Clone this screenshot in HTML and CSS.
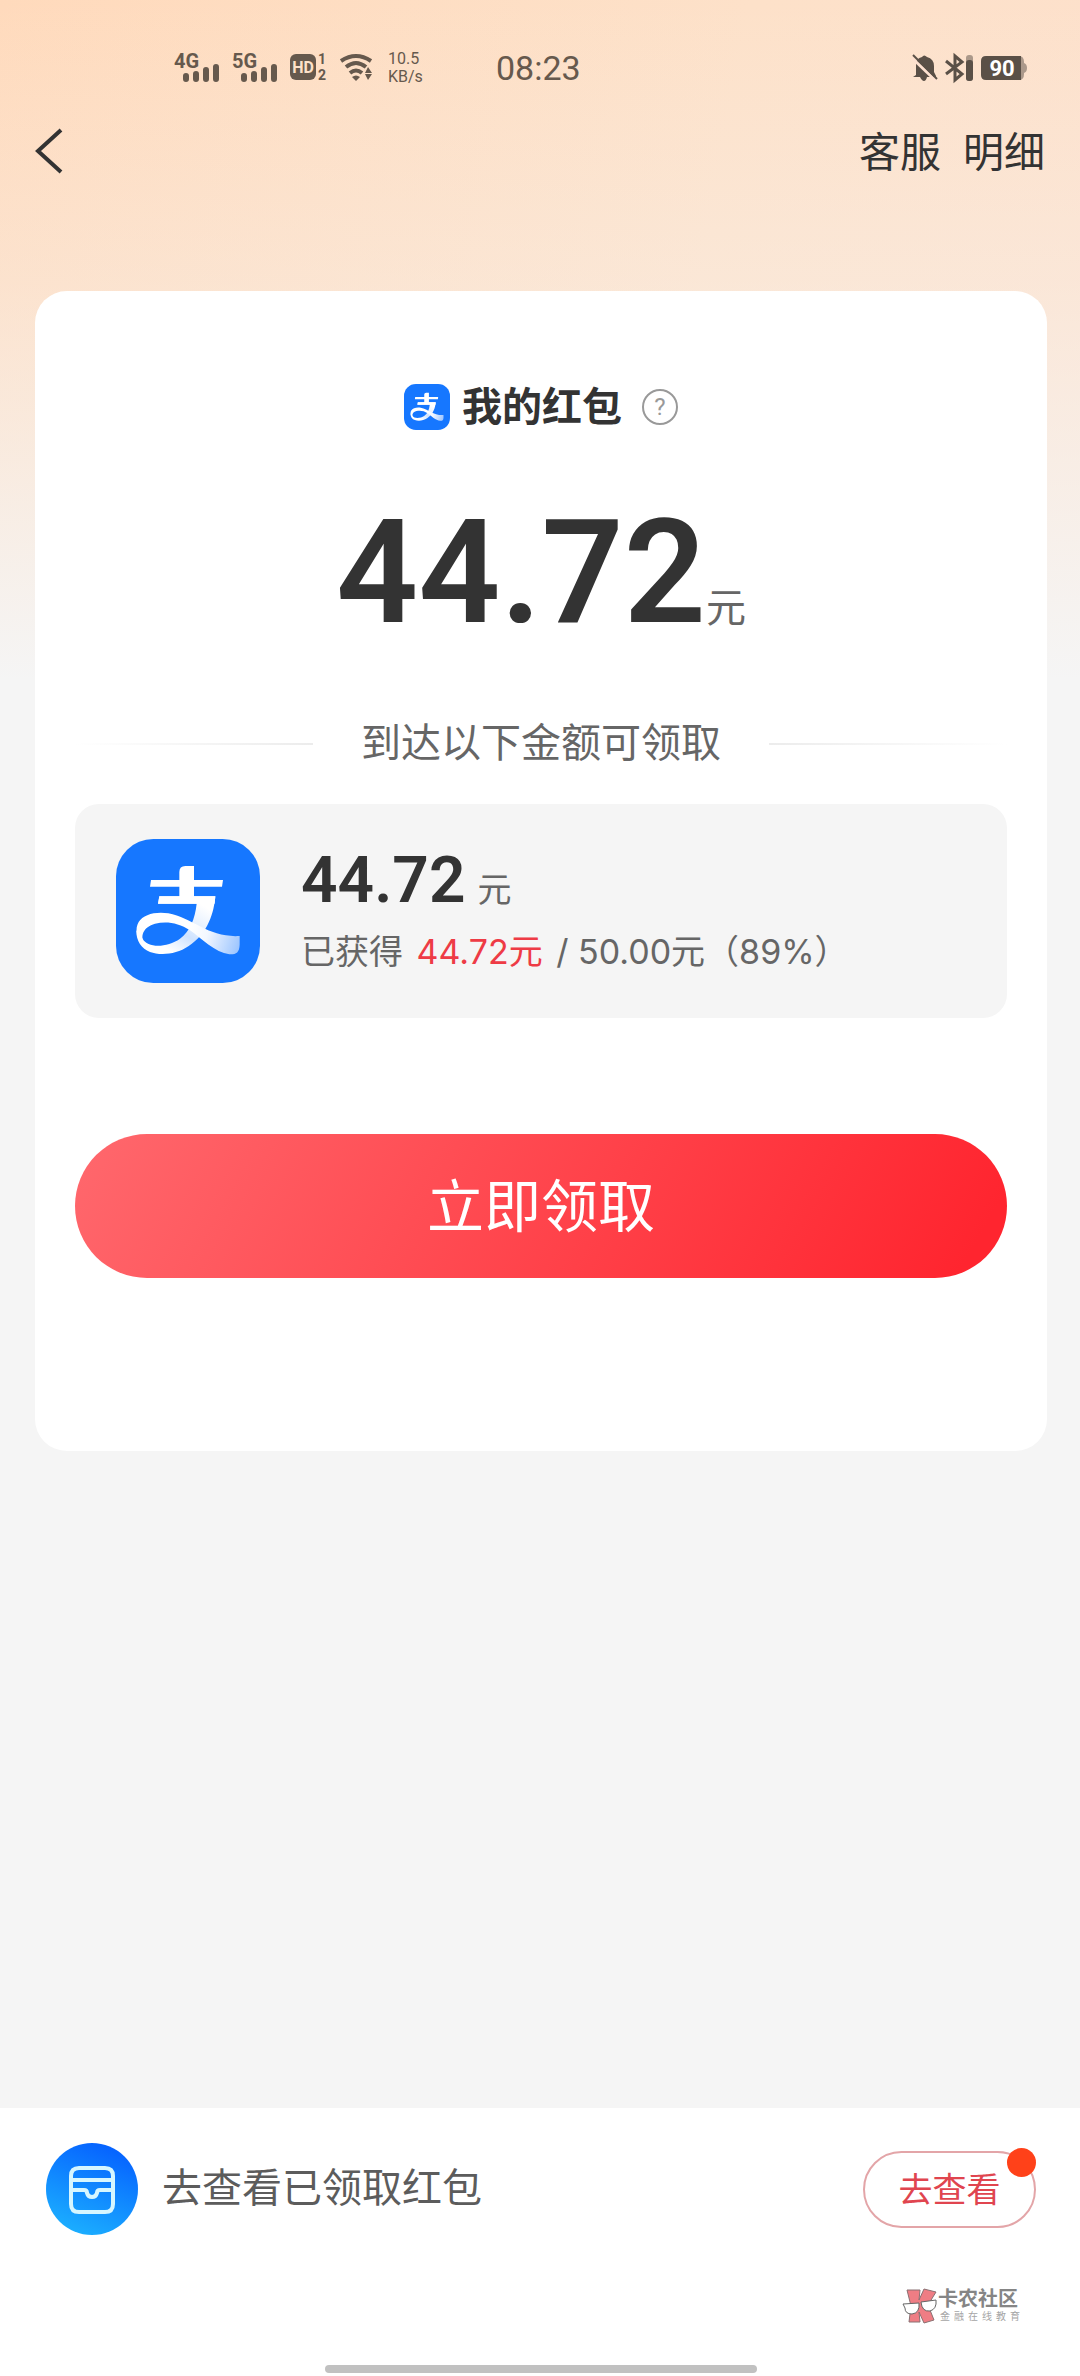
FILE: index.html
```html
<!DOCTYPE html>
<html lang="zh-CN">
<head>
<meta charset="utf-8">
<meta name="viewport" content="width=device-width, initial-scale=1">
<title>我的红包</title>
<link rel="stylesheet" href="styles.css">
</head>
<body>
<svg class="defs" aria-hidden="true">
  <defs>
    <linearGradient id="tail" gradientUnits="userSpaceOnUse" x1="270" y1="320" x2="420" y2="370">
      <stop offset="0" stop-color="#fff"/><stop offset=".35" stop-color="#f2f7ff"/><stop offset="1" stop-color="#9cc5ff"/>
    </linearGradient>
    <linearGradient id="leg" gradientUnits="userSpaceOnUse" x1="300" y1="245" x2="215" y2="390">
      <stop offset="0" stop-color="#fff"/><stop offset=".4" stop-color="#e3efff"/><stop offset=".62" stop-color="#cfe3ff"/><stop offset="1" stop-color="#fff"/>
    </linearGradient>
    <symbol id="alipay" viewBox="48 51 432 432">
      <rect x="48" y="51" width="432" height="432" rx="112" fill="#1677ff"/>
      <path fill="url(#leg)" d="M178 223H346C342 270 325 335 265 373C230 398 180 401 150 390C125 380 108 358 109 325L128 350C142 378 200 378 240 350C270 328 285 290 290 245H174Z"/>
      <path fill="#fff" d="M153 174H238V150Q238 132 256 132H282V174H369L366 194H282V223H346L344 245H174L178 223H238V194H150Z"/>
      <path fill="url(#tail)" d="M135 368C108 350 104 320 116 300C130 278 165 268 205 274C240 280 270 298 300 313C335 332 375 345 419 342V368C418 392 408 398 388 397C345 392 305 350 270 325C235 302 200 297 165 305C130 315 118 342 135 368Z"/>
    </symbol>
  </defs>
</svg>
<div class="page">
  <header class="status">
    <div class="status-left">
      <svg width="46" height="32" viewBox="0 0 46 32" role="img" aria-label="4G">
        <text class="net" x="0" y="16">4G</text>
        <path class="bars" d="M12 24v3M22 22v5M32 18v9M42 15v12"/>
      </svg>
      <svg width="46" height="32" viewBox="0 0 46 32" role="img" aria-label="5G">
        <text class="net" x="0" y="16">5G</text>
        <path class="bars" d="M12 24v3M22 22v5M32 18v9M42 15v12"/>
      </svg>
      <svg width="38" height="32" viewBox="0 0 38 32" role="img" aria-label="HD">
        <rect x="0" y="2" width="26" height="26" rx="6"/>
        <text class="hd" x="13" y="21">HD</text>
        <text class="sim" x="28" y="12">1</text>
        <text class="sim" x="28" y="28">2</text>
      </svg>
      <svg width="32" height="32" viewBox="0 0 32 32" aria-hidden="true">
        <path class="wave" d="M1 9Q16-1 31 9M6 15Q16 7 26 15M10 21Q16 16 22 21"/>
        <path d="M12 25Q16 22 20 25L16 29Z M28 15l4 6h-7z M28 28l4-6h-7z"/>
      </svg>
      <div class="speed"><span>10.5</span><span>KB/s</span></div>
    </div>
    <time class="clock">08:23</time>
    <div class="status-right">
      <svg width="26" height="28" viewBox="0 0 26 28" aria-hidden="true">
        <path d="M4 21V11Q4 4 10 3Q12 0 15 3Q22 5 22 12V18L24 22V23H15Q14 27 12 27T8 23H1Z"/>
        <path class="slash-gap" d="M0 4L24 27"/><path class="slash" d="M1 1L25 25"/>
      </svg>
      <svg width="30" height="28" viewBox="0 0 30 28" aria-hidden="true">
        <path class="bt" d="M2 7L18 20L11 26V2L18 8L2 20"/>
        <rect x="22" y="1" width="7" height="26" rx="3" opacity=".5"/><rect x="22" y="6" width="7" height="21" rx="3"/>
      </svg>
      <svg width="48" height="28" viewBox="0 0 48 28" role="img" aria-label="90">
        <path opacity=".5" d="M38 2h1q5 0 5 6v1q3 1 3 5t-3 5v1q0 6-5 6h-1z"/>
        <path d="M6 2H41V26H6Q1 26 1 21V7Q1 2 6 2Z"/>
        <text class="battery" x="22" y="22">90</text>
      </svg>
    </div>
  </header>

  <nav class="nav">
    <button class="back" type="button" aria-label="返回">
      <svg width="28" height="46" viewBox="0 0 28 46"><path d="M26 2L3 23L26 44"/></svg>
    </button>
    <div class="links"><a href="#service">客服</a><a href="#detail">明细</a></div>
  </nav>

  <main class="card">
    <h1 class="title">
      <svg class="logo-small"><use href="#alipay"/></svg>
      <span>我的红包</span>
      <button class="help" type="button" aria-label="说明">?</button>
    </h1>
    <p class="total"><strong>44.72</strong><span>元</span></p>
    <p class="divider"><span>到达以下金额可领取</span></p>
    <section class="goal">
      <svg class="logo"><use href="#alipay"/></svg>
      <div class="goal-text">
        <p class="goal-amount"><strong>44.72</strong><span>元</span></p>
        <p class="progress">已获得 <em>44.72元</em> / 50.00元（89%）</p>
      </div>
    </section>
    <button class="claim" type="button">立即领取</button>
  </main>

  <footer class="footer">
    <div class="footer-row">
      <svg class="box" viewBox="0 0 92 92" aria-hidden="true">
        <defs><linearGradient id="sky" x1=".7" y1="0" x2=".3" y2="1"><stop offset="0" stop-color="#0560ff"/><stop offset="1" stop-color="#1cb0ff"/></linearGradient></defs>
        <circle cx="46" cy="46" r="46" fill="url(#sky)"/>
        <path d="M33 25H59Q67 25 67 33V61Q67 69 59 69H33Q25 69 25 61V33Q25 25 33 25ZM25 37H67M25 47H38Q41 47 41 50Q42 54 46 54T51 50Q51 47 54 47H67"/>
      </svg>
      <p class="footer-text">去查看已领取红包</p>
      <button class="view" type="button">去查看<i class="dot"></i></button>
    </div>
    <div class="brand">
      <svg width="36" height="36" viewBox="0 0 36 36" aria-hidden="true">
        <path class="k" d="M5 2H18L17 12L22 1L34 4L26 17L32 32L22 35L17 24L18 34H7L9 18Z"/>
        <path class="lens" d="M1 16L17 15Q18 25 10 26Q3 26 3 20ZM19 14L34 12Q35 21 28 23Q20 24 19 14Z"/>
      </svg>
      <div class="brand-text"><b>卡农社区</b><small><span>金</span><span>融</span><span>在</span><span>线</span><span>教</span><span>育</span></small></div>
    </div>
    <div class="home"></div>
  </footer>
</div>
</body>
</html>
```
FILE: styles.css
```css
* { box-sizing: border-box; margin: 0; padding: 0; }

body {
  background: #f5f5f5;
  color: #333;
  font-family: Roboto, "Noto Sans CJK SC", sans-serif;
}

button { border: 0; background: none; font: inherit; color: inherit; cursor: pointer; }
a { color: inherit; text-decoration: none; }
svg { display: block; flex: none; overflow: visible; }
.defs { position: absolute; width: 0; height: 0; }

.page {
  display: flex;
  flex-direction: column;
  min-height: 100vh;
  background:
    linear-gradient(to bottom, rgba(245, 245, 245, 0) 0, rgba(245, 245, 245, .3) 280px, #f5f5f5 680px),
    linear-gradient(100deg, #ffdabc 0%, #fde1c9 50%, #fde0cd 100%);
}

/* Status bar */
.status {
  display: grid;
  grid-template-columns: 322px auto 1fr;
  align-items: center;
  height: 106px;
  padding: 30px 52px 0 174px;
  color: #66594d;
}
.status svg { fill: currentColor; }
.status-left { display: flex; align-items: center; gap: 12px; }
.status-right { display: flex; align-items: center; justify-content: flex-end; gap: 6px; color: #5a5047; }
.net { font: 700 20px/20px Roboto, sans-serif; }
.bars { stroke: currentColor; stroke-width: 6; stroke-linecap: round; }
.hd { font: 700 16px/16px Roboto, sans-serif; fill: #fde1c9; text-anchor: middle; }
.sim { font: 700 14px/14px Roboto, sans-serif; }
.wave { fill: none; stroke: currentColor; stroke-width: 4; }
.speed { display: flex; flex-direction: column; padding-left: 4px; font-size: 16px; line-height: 18px; }
.clock { font-size: 34px; line-height: 40px; }
.slash-gap { stroke: #fde1d0; stroke-width: 3; }
.slash { stroke: currentColor; stroke-width: 2; }
.bt { fill: none; stroke: currentColor; stroke-width: 3; }
.battery { font: 700 22px/22px Roboto, sans-serif; fill: #fff; text-anchor: middle; }

/* Navigation */
.nav {
  display: flex;
  align-items: center;
  justify-content: space-between;
  height: 90px;
  margin-bottom: 95px;
  padding: 0 35px;
}
.back svg { fill: none; stroke: #333; stroke-width: 4; }
.links { display: flex; gap: 22px; padding-top: 4px; font-size: 41px; line-height: 60px; }

/* Card */
.card {
  margin: 0 33px 0 35px;
  padding: 85px 40px 173px;
  border-radius: 32px;
  background: #fff;
}
.title {
  display: flex;
  align-items: center;
  justify-content: center;
  gap: 12px;
  font-size: 40px;
  font-weight: 700;
  line-height: 60px;
}
.title span { padding-top: 2px; }
.logo-small { width: 46px; height: 46px; }
.help {
  width: 36px;
  height: 36px;
  margin-left: 8px;
  border: 2px solid #999;
  border-radius: 50%;
  color: #999;
  font-size: 24px;
  font-weight: 400;
  line-height: 32px;
}
.total {
  display: flex;
  align-items: baseline;
  justify-content: center;
  margin-top: 50px;
  line-height: 170px;
}
.total strong { font-size: 144px; font-weight: 600; }
.total span { font-size: 40px; color: #666; }
.divider {
  display: flex;
  align-items: center;
  gap: 48px;
  margin-top: 20px;
  color: #666;
  font-size: 40px;
  line-height: 60px;
}
.divider::before, .divider::after { content: ""; flex: 1; height: 2px; background: linear-gradient(to right, #fff, #ececec); }
.divider::after { background: linear-gradient(to left, #fff, #ececec); }
.goal {
  display: flex;
  align-items: flex-start;
  gap: 41px;
  margin-top: 30px;
  padding: 35px 41px;
  border-radius: 24px;
  background: #f5f5f5;
}
.logo { width: 144px; height: 144px; }
.goal-amount { display: flex; align-items: baseline; gap: 12px; line-height: 84px; }
.goal-amount strong { font-size: 64px; font-weight: 600; }
.goal-amount span { font-size: 34px; color: #666; }
.progress { color: #666; font-family: Inter, "Noto Sans CJK SC", sans-serif; font-size: 34px; line-height: 40px; }
.progress em { margin: 0 4px; color: #ee3b45; font-style: normal; }
.claim {
  display: block;
  width: 100%;
  height: 144px;
  margin-top: 116px;
  padding-bottom: 8px;
  border-radius: 72px;
  background: linear-gradient(120deg, #ff686d 0%, #ff252f 95%);
  color: #fff;
  font-size: 57px;
}

/* Footer */
.footer { margin-top: auto; padding: 35px 44px 3px 46px; background: #fff; }
.footer-row { display: flex; align-items: center; }
.box { width: 92px; height: 92px; }
.box path { fill: none; stroke: #d6f6ff; stroke-width: 4; }
.footer-text { flex: 1; margin-left: 24px; color: #5c5c5c; font-size: 40px; line-height: 60px; }
.view {
  position: relative;
  width: 173px;
  height: 77px;
  padding-bottom: 4px;
  border: 2px solid #e3a5a8;
  border-radius: 39px;
  color: #e0454f;
  font-size: 34px;
}
.dot { position: absolute; top: -5px; right: -2px; width: 29px; height: 29px; border-radius: 50%; background: #ff4119; }
.brand { display: flex; justify-content: flex-end; margin-top: 53px; padding-right: 16px; color: #858585; }
.k { fill: #ef7d84; stroke: #8a7072; stroke-width: 1; }
.lens { fill: #fff; stroke: #666; stroke-width: 1; }
.brand-text { display: flex; flex-direction: column; width: 82px; }
.brand-text b { font-size: 20px; font-weight: 700; line-height: 22px; }
.brand-text small { display: flex; justify-content: space-between; padding-left: 2px; font-size: 10px; line-height: 13px; color: #a5a5a5; }
.home { width: 432px; height: 8px; margin: 41px auto 0; border-radius: 4px; background: #c1c1c1; }
```
